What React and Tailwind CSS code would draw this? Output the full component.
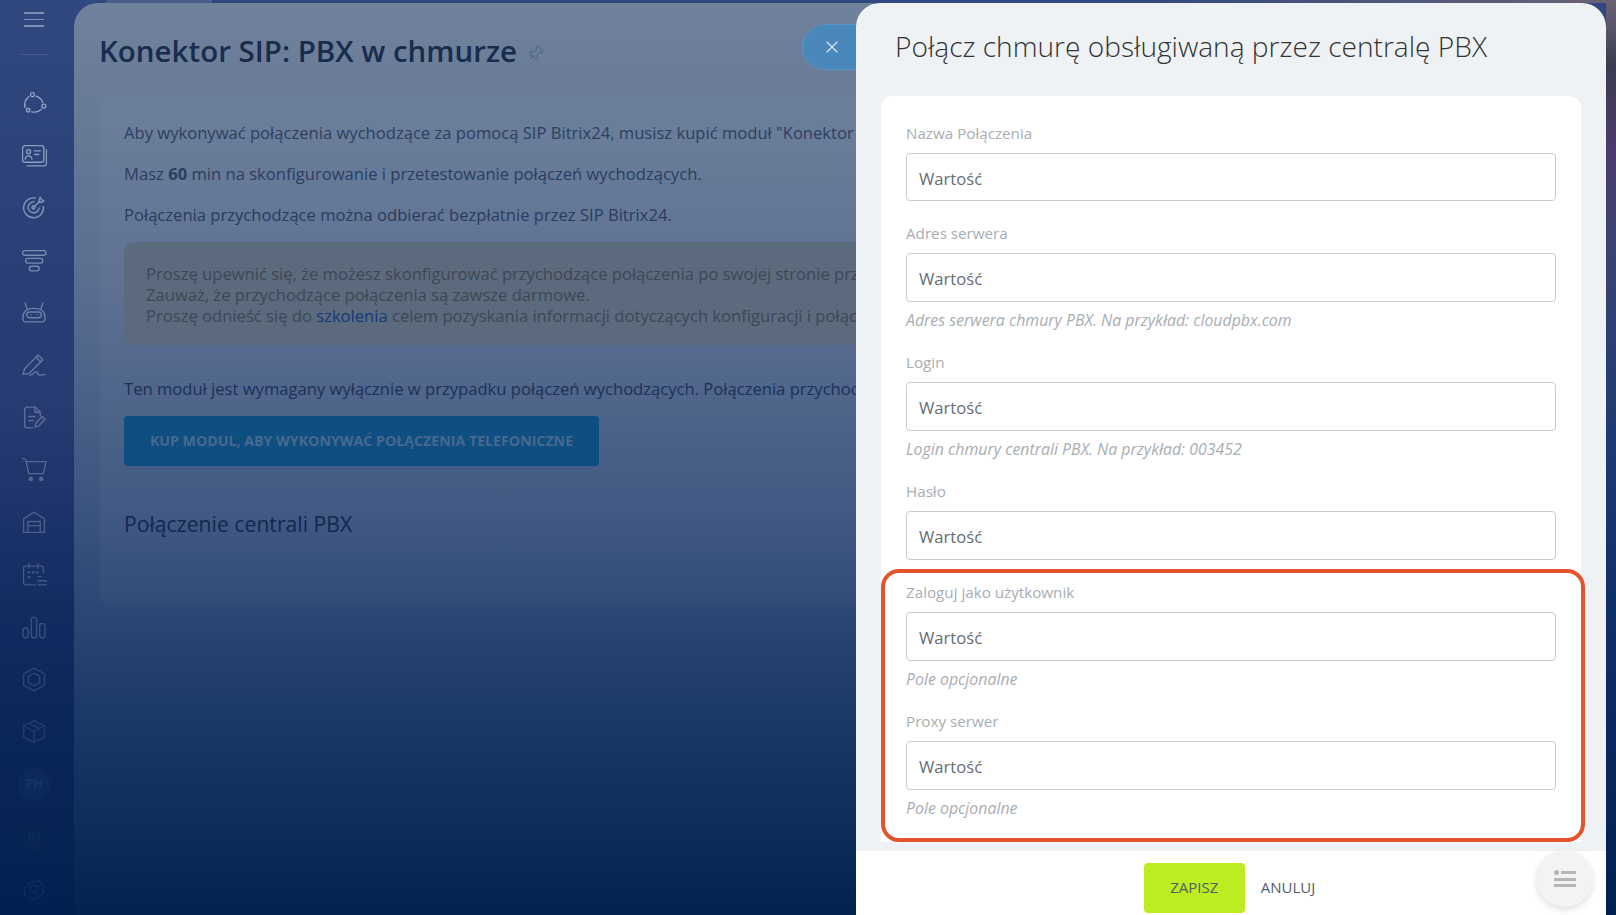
import { X, Pin } from 'lucide-react';

const Ico = ({ className, children }) => (
  <svg viewBox="0 0 24 24" fill="none" stroke="currentColor" strokeWidth="1.3" strokeLinecap="round" strokeLinejoin="round" className={className}>
    {children}
  </svg>
);

const sideIcons = [
  {
    color: 'text-[#93a3c2]',
    draw: (
      <>
        <circle cx="10" cy="3.500" r="1.900" />
        <circle cx="6" cy="18.500" r="1.700" />
        <circle cx="21" cy="14.500" r="1.900" />
        <path d="M13.500 5A10 10 0 0 1 20 11M18.500 17.800A10 10 0 0 1 9.500 20M3 16A10 10 0 0 1 6.500 5.500" />
      </>
    ),
  },
  {
    color: 'text-[#8c9dbd]',
    draw: (
      <>
        <rect x="0.500" y="2.500" width="20.500" height="16" rx="2.500" />
        <path d="M23.500 6.500v13a2.500 2.500 0 0 1-2.500 2.500H5" />
        <circle cx="6.300" cy="8.500" r="2" />
        <path d="M3 15.500c.3-2.300 1.700-3.200 3.300-3.200s3 .9 3.300 3.200M12 7.500h5.500M12 11h4" />
      </>
    ),
  },
  {
    color: 'text-[#8496b7]',
    draw: (
      <>
        <path d="M20.500 11A9.500 9.500 0 1 1 13 3" />
        <path d="M16.500 12.500a5.300 5.300 0 1 1-5-6" />
        <circle cx="11" cy="12" r="1.400" />
        <path d="M11.500 11.500 17 6M16.500 4.500l1-2.500 1 2.500 2.500 1-2 1.500-2.700-.2z" />
      </>
    ),
  },
  {
    color: 'text-[#7a8cae]',
    draw: (
      <>
        <rect x="0.500" y="2.500" width="22.500" height="4.500" rx="2.200" />
        <rect x="3.500" y="10" width="16.500" height="4.500" rx="2.200" />
        <rect x="7" y="17.500" width="9.500" height="4.500" rx="2.200" />
      </>
    ),
  },
  {
    color: 'text-[#6f81a5]',
    draw: (
      <>
        <path d="M1 16c0-5 4-8 10.500-8S22 11 22 16v2.500a2.500 2.500 0 0 1-2.500 2.500h-16A2.500 2.500 0 0 1 1 18.500z" />
        <path d="M5 9 3 3M18 9l2-6" />
        <rect x="4.500" y="11.500" width="14" height="5.500" rx="2.700" />
        <path d="M8.500 14.300h.01M14.500 14.300h.01" />
      </>
    ),
  },
  {
    color: 'text-[#677a9f]',
    draw: (
      <>
        <path d="M1 20.500 2.500 15 15.500 2l4.500 4.500L7 19.500z" />
        <path d="M13.500 4 18 8.500M7.500 21.500c3-.5 4.500-4 6.500-3.500 1.500.4.500 3 3 3.200 1.500.1 3.500-.2 5.500-.7" />
      </>
    ),
  },
  {
    color: 'text-[#5f7298]',
    draw: (
      <>
        <path d="M17.500 10.500V7l-5-5H5A2.500 2.500 0 0 0 2.500 4.500v15A2.500 2.500 0 0 0 5 22h5.500" />
        <path d="M12.500 2v5h5M6.500 11h6M6.500 15h4" />
        <path d="m12.500 21 .8-3.500 6.200-6.500 2.700 2.700-6.200 6.500z" />
      </>
    ),
  },
  {
    color: 'text-[#566990]',
    draw: (
      <>
        <path d="M0 1l3.500 1.500L6.500 16h14L23 4.500H4" />
        <circle cx="8.500" cy="21" r="1.500" fill="currentColor" />
        <circle cx="18.500" cy="21" r="1.500" fill="currentColor" />
      </>
    ),
  },
  {
    color: 'text-[#4c6089]',
    draw: (
      <>
        <path d="M1.500 21.500V8.500L11.500 2l10 6.500v13z" />
        <path d="M5.500 21.500V11h12v10.500M5.500 15h12" />
      </>
    ),
  },
  {
    color: 'text-[#435882]',
    draw: (
      <>
        <path d="M20.500 10V6a2 2 0 0 0-2-2H3.500a2 2 0 0 0-2 2v14a2 2 0 0 0 2 2h9" />
        <path d="M6.500 1.500V6M15.500 1.500V6M15.500 18H24M15.500 22H24M15.500 14h3" />
        <path d="M6.500 10h.5M10.500 10h.5M14.500 10h.5M6.500 14.500h.5" strokeWidth="2.200" />
      </>
    ),
  },
  {
    color: 'text-[#3a5080]',
    draw: (
      <>
        <rect x="1" y="12.500" width="5" height="9.500" rx="2.500" />
        <rect x="9" y="2" width="5" height="20" rx="2.500" />
        <rect x="17" y="8" width="5" height="14" rx="2.500" />
      </>
    ),
  },
  {
    color: 'text-[#2f4675]',
    draw: (
      <>
        <path d="M11.500 1 21.500 6.500v11L11.500 23l-10-5.500v-11z" />
        <path d="m11.500 6 5.500 3v6l-5.500 3L6 15V9z" />
      </>
    ),
  },
  {
    color: 'text-[#223b6b]',
    draw: (
      <>
        <path d="M11.500 1.500 21.500 6.500v11l-10 5-10-5v-11z" />
        <path d="M1.500 6.500 11.500 12l10-5.500M11.500 12v10.500M6.500 4l10 5.300" />
      </>
    ),
  },
];

const fields = [
  { label: 'Nazwa Połączenia' },
  { label: 'Adres serwera', hint: 'Adres serwera chmury PBX. Na przykład: cloudpbx.com' },
  { label: 'Login', hint: 'Login chmury centrali PBX. Na przykład: 003452' },
  { label: 'Hasło' },
  { label: 'Zaloguj jako użytkownik', hint: 'Pole opcjonalne' },
  { label: 'Proxy serwer', hint: 'Pole opcjonalne' },
];

const Sidebar = () => (
  <aside className="flex w-[74px] shrink-0 flex-col items-center pr-[6px]">
    <div className="flex h-[54px] w-full shrink-0 flex-col items-center justify-center pb-[15px]">
      <div className="flex w-[20px] flex-col gap-[5px]">
        <span className="h-[1.500px] bg-[#7d8fb3]" />
        <span className="h-[1.500px] bg-[#7d8fb3]" />
        <span className="h-[1.500px] bg-[#7d8fb3]" />
      </div>
    </div>
    <div className="h-px w-[30px] shrink-0 bg-[#46598a]" />
    <nav className="mt-[22px] flex w-full shrink-0 flex-col items-center">
      {sideIcons.map((icon, i) => (
        <div key={i} className="flex h-[52.400px] items-center justify-center">
          <Ico className={`h-[25px] w-[25px] ${icon.color}`}>{icon.draw}</Ico>
        </div>
      ))}
      <div className="flex h-[52.400px] items-center justify-center">
        <div className="flex h-[32px] w-[32px] items-center justify-center rounded-full bg-[#0c295a] text-[12px] font-bold text-[#173464]">PH</div>
      </div>
      <div className="flex h-[52.400px] items-center justify-center">
        <div className="flex h-[32px] w-[32px] items-center justify-center rounded-full bg-[#072452] text-[12px] font-bold text-[#0f2c5b]">DI</div>
      </div>
      <div className="flex h-[52.400px] items-center justify-center text-[#0f2d5c]">
        <Ico className="h-[24px] w-[24px]">
          <circle cx="12" cy="12" r="3.500" />
          <path d="M12 1.500l2 3 3.500-.5 1.500 3.200 3 1.800-1 3.500 1 3.500-3 1.800-1.500 3.200-3.500-.5-2 3-2-3-3.500.5L5 19.800 2 18l1-3.500L2 11l3-1.800L6.500 6l3.500.5z" />
        </Ico>
      </div>
    </nav>
  </aside>
);

const MainPanel = () => (
  <main className="relative mt-[3px] w-[800px] shrink-0 overflow-hidden rounded-tl-[24px] bg-[linear-gradient(180deg,#70829b_0%,#5a6e90_30%,#3c5580_55%,#1f3c6a_75%,#03234f_100%)]">
    <div className="flex h-[93px] items-center pl-[25px] pt-[3px]">
      <h1 className="whitespace-nowrap text-[29.500px] font-semibold text-[#182c4d]">Konektor SIP: PBX w chmurze</h1>
      <Pin className="ml-[10px] mt-[4px] h-[17px] w-[17px] rotate-45 text-[#566b8a]" strokeWidth={1.800} />
    </div>
    <section className="ml-[26px] h-[511px] rounded-[12px] bg-[#ffffff08] pl-[24px] pt-[26px] text-[16.600px]">
      <p className="whitespace-nowrap leading-[22px] text-[#2d4060]">
        Aby wykonywać połączenia wychodzące za pomocą SIP Bitrix24, musisz kupić moduł "Konektor SIP: PBX w chmurze"
      </p>
      <p className="mt-[19px] whitespace-nowrap leading-[22px] text-[#2a3e5f]">
        Masz <b>60</b> min na skonfigurowanie i przetestowanie połączeń wychodzących.
      </p>
      <p className="mt-[19px] whitespace-nowrap leading-[22px] text-[#283c5e]">
        Połączenia przychodzące można odbierać bezpłatnie przez SIP Bitrix24.
      </p>
      <div className="mt-[16px] h-[103px] rounded-[10px] bg-[#5b6a7c] pl-[22px] pt-[21px] leading-[21px] text-[#3d4856]">
        <p className="whitespace-nowrap">Proszę upewnić się, że możesz skonfigurować przychodzące połączenia po swojej stronie przed zakupem modułu.</p>
        <p className="whitespace-nowrap">Zauważ, że przychodzące połączenia są zawsze darmowe.</p>
        <p className="whitespace-nowrap">
          Proszę odnieść się do <span className="text-[#17397c]">szkolenia</span> celem pozyskania informacji dotyczących konfiguracji i połączenia.
        </p>
      </div>
      <p className="mt-[33px] whitespace-nowrap leading-[22px] text-[#1c3158]">
        Ten moduł jest wymagany wyłącznie w przypadku połączeń wychodzących. Połączenia przychodzące są bezpłatne.
      </p>
      <button className="mt-[16px] flex h-[50px] w-[475px] items-center justify-center rounded-[4px] bg-[#0f4e80] text-[14.200px] font-bold text-[#46698f]">
        KUP MODUL, ABY WYKONYWAĆ POŁĄCZENIA TELEFONICZNE
      </button>
      <h2 className="mt-[41px] text-[21.200px] leading-[34px] text-[#11284f]">Połączenie centrali PBX</h2>
    </section>
  </main>
);

const Field = ({ label, hint, first }) => (
  <div className="pb-[22px]">
    <div className="mb-[10px] h-[20px] text-[15.200px] leading-[20px] text-[#a8adb4]">{label}</div>
    <div className={`flex items-center rounded-[4px] border border-[#c6cdd3] pl-[12px] pt-[4px] text-[16.600px] text-[#666b73] ${first ? 'h-[48px]' : 'h-[49px]'}`}>Wartość</div>
    {hint && <div className="-mb-[1px] h-[29px] pt-[8px] text-[15.900px] italic leading-[20px] text-[#a8adb4]">{hint}</div>}
  </div>
);

const Slider = () => (
  <div className="absolute bottom-0 left-[856px] top-[3px] flex w-[750px] flex-col overflow-hidden rounded-t-[24px] bg-[#eef2f4]">
    <div className="flex h-[93px] shrink-0 items-center pb-[7px] pl-[39px]">
      <h2 className="whitespace-nowrap text-[28.100px] font-light text-[#333333]">Połącz chmurę obsługiwaną przez centralę PBX</h2>
    </div>
    <div className="mx-[25px] flex-1 rounded-t-[12px] bg-white px-[25px] pt-[27px]">
      {fields.map((f, i) => (
        <Field key={f.label} first={i === 0} {...f} />
      ))}
    </div>
    <div className="mt-[9px] flex h-[64px] shrink-0 items-start justify-center gap-[16px] bg-white pr-[3px] pt-[12px]">
      <button className="h-[50px] w-[101px] rounded-[4px] bg-[#bbed21] pb-[1px] text-[15px] font-medium text-[#535c69]">ZAPISZ</button>
      <button className="h-[50px] pb-[1px] text-[15px] font-medium text-[#535c69]">ANULUJ</button>
    </div>
  </div>
);

export default function App() {
  return (
    <div className="relative flex h-[915px] w-[1616px] overflow-hidden bg-[linear-gradient(180deg,#30487f_0%,#273a72_45%,#0f2a5e_70%,#02204f_100%)] font-['Open_Sans',sans-serif]">
      <Sidebar />
      <MainPanel />
      <div className="absolute left-[106px] top-0 h-[3px] w-[106px] bg-[#4a5c88]" />
      <div className="absolute right-0 top-0 h-[3px] w-[500px] bg-[linear-gradient(90deg,#2f487f,#6a6274)]" />
      <div className="absolute bottom-0 right-0 top-0 w-[10px] bg-[linear-gradient(180deg,#6a6274_0%,#58546a_3%,#3c3c50_7%,#4b3b6c_16%,#394372_28%,#223c72_45%,#10306a_65%,#02204f_100%)]" />
      <div className="absolute left-[802px] top-[24px] flex h-[46px] w-[80px] items-start rounded-l-full border border-[#5a95c6] bg-[#4a87bb] pl-[19px] pt-[12px] text-[#e6eef5]">
        <X className="h-[20px] w-[20px]" strokeWidth={1.300} />
      </div>
      <Slider />
      {/* highlight round the optional fields */}
      <div className="absolute left-[881px] top-[569px] h-[273px] w-[704px] rounded-[18px] border-4 border-[#e4532b]" />
      <div className="absolute left-[1536px] top-[850px] flex h-[57px] w-[57px] flex-col items-center justify-center gap-[3px] rounded-full bg-[#f3f3f3] shadow-[0_3px_6px_rgba(0,0,0,0.12)]">
        <div className="flex w-[22px] items-center gap-[2px]">
          <span className="h-[5px] w-[5px] rounded-full bg-[#b4b6ba]" />
          <span className="h-[3px] flex-1 bg-[#b4b6ba]" />
        </div>
        <span className="h-[3px] w-[22px] bg-[#b4b6ba]" />
        <span className="h-[3px] w-[22px] bg-[#b4b6ba]" />
      </div>
    </div>
  );
}
